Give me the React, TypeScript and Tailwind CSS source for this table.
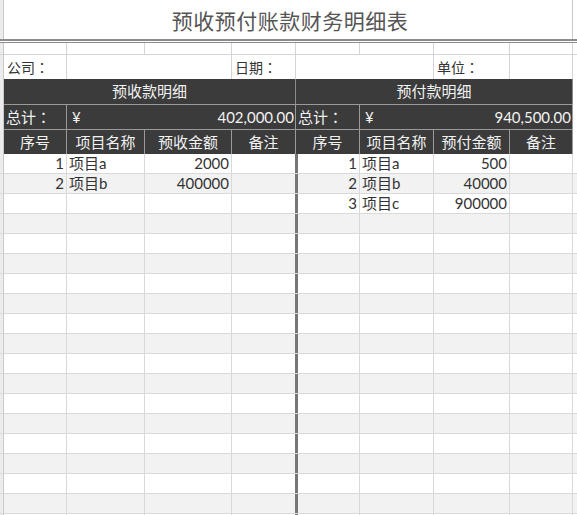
import React from "react";

const font = { fontFamily: '"Lato", "Noto Sans CJK SC", sans-serif' };

const W = [
  "w-[63px]",
  "w-[78px]",
  "w-[87px]",
  "w-[64px]",
  "w-[64px]",
  "w-[74px]",
  "w-[76px]",
  "w-[63px]",
];

function Strip({ cls = "" }: { cls?: string }) {
  return <div className={`w-[4px] shrink-0 bg-[#ececec] border-r border-[#c9c9c9] ${cls}`} />;
}

function Label({ t }: { t: string }) {
  return (
    <>
      {t}
      <span style={{ fontFamily: '"Noto Sans CJK TC", sans-serif' }}>：</span>
    </>
  );
}

const left = [
  { n: "1", name: "项目a", amt: "2000" },
  { n: "2", name: "项目b", amt: "400000" },
];
const right = [
  { n: "1", name: "项目a", amt: "500" },
  { n: "2", name: "项目b", amt: "40000" },
  { n: "3", name: "项目c", amt: "900000" },
];

export default function App() {
  const rows = Array.from({ length: 19 }, (_, i) => i);
  return (
    <div className="w-[577px] h-[515px] overflow-hidden bg-white text-[#333]" style={font}>
      {/* title */}
      <div className="flex h-[39px]">
        <Strip />
        <div className="w-[569px] border-r border-[#c9c9c9] flex items-center justify-center pt-[2px] pl-[4px] text-[21px] text-[#555] tracking-[0.5px]">
          预收预付账款财务明细表
        </div>
        <div className="flex-1" />
      </div>
      {/* double line */}
      <div className="h-[4px] border-t-2 border-b border-[#8c8c8c] bg-white" />
      {/* blank row */}
      <div className="flex h-[12px] border-b border-[#d4d4d4]">
        <Strip />
        {W.map((w, i) => (
          <div key={i} className={`${w} shrink-0 border-r border-[#d4d4d4]`} />
        ))}
      </div>
      {/* company row */}
      <div className="flex h-[24px] text-[14px] leading-[24px]">
        <Strip />
        <div className="w-[63px] shrink-0 border-r border-[#d4d4d4] pl-[3px]"><Label t="公司" /></div>
        <div className="w-[165px] shrink-0 border-r border-[#d4d4d4]" />
        <div className="w-[64px] shrink-0 border-r border-[#d4d4d4] pl-[3px]"><Label t="日期" /></div>
        <div className="w-[138px] shrink-0 border-r border-[#d4d4d4]" />
        <div className="w-[76px] shrink-0 border-r border-[#d4d4d4] pl-[3px]"><Label t="单位" /></div>
        <div className="w-[63px] shrink-0 border-r border-[#d4d4d4]" />
      </div>
      {/* section header */}
      <div className="flex h-[25px] text-[15px] leading-[25px] text-[#f2f2f2]">
        <Strip />
        <div className="w-[292px] shrink-0 bg-[#3b3b3b] border-r border-[#8a8a8a] text-center">预收款明细</div>
        <div className="w-[277px] shrink-0 bg-[#3b3b3b] border-r border-[#8a8a8a] text-center">预付款明细</div>
      </div>
      {/* total row */}
      <div className="flex h-[25px] text-[15px] leading-[24px] text-[#f2f2f2]">
        <Strip />
        <div className="w-[63px] shrink-0 bg-[#3b3b3b] border-r border-t border-[#9a9a9a] pl-[2px]"><Label t="总计" /></div>
        <div className="w-[229px] shrink-0 bg-[#3b3b3b] border-r border-t border-[#9a9a9a] flex justify-between pl-[5px] pr-[1px]">
          <span>¥</span>
          <span>402,000.00</span>
        </div>
        <div className="w-[64px] shrink-0 bg-[#3b3b3b] border-r border-t border-[#9a9a9a] pl-[2px]"><Label t="总计" /></div>
        <div className="w-[213px] shrink-0 bg-[#3b3b3b] border-r border-t border-[#9a9a9a] flex justify-between pl-[5px] pr-[1px]">
          <span>¥</span>
          <span>940,500.00</span>
        </div>
      </div>
      {/* column header */}
      <div className="flex h-[25px] text-[15px] leading-[24px] text-[#f2f2f2]">
        <Strip />
        {["序号", "项目名称", "预收金额", "备注", "序号", "项目名称", "预付金额", "备注"].map((t, i) => (
          <div key={i} className={`${W[i]} shrink-0 bg-[#3b3b3b] border-r border-t border-[#9a9a9a] text-center`}>
            {t}
          </div>
        ))}
      </div>
      {/* data rows */}
      {rows.map((r) => {
        const l = left[r];
        const rt = right[r];
        const bg = r % 2 === 1 ? "bg-[#f2f2f2]" : "bg-white";
        return (
          <div key={r} className={`flex h-[20px] text-[15px] leading-[19px] border-b border-[#d9d9d9] ${bg}`}>
            <Strip />
            <div className="w-[63px] shrink-0 border-r border-[#d9d9d9] text-right pr-[2px]">{l?.n}</div>
            <div className="w-[78px] shrink-0 border-r border-[#d9d9d9] pl-[2px]">{l?.name}</div>
            <div className="w-[87px] shrink-0 border-r border-[#d9d9d9] text-right pr-[2px]">{l?.amt}</div>
            <div className="w-[66px] shrink-0 border-r-[3px] border-[#767676]" />
            <div className="w-[62px] shrink-0 border-r border-[#d9d9d9] text-right pr-[2px]">{rt?.n}</div>
            <div className="w-[74px] shrink-0 border-r border-[#d9d9d9] pl-[2px]">{rt?.name}</div>
            <div className="w-[76px] shrink-0 border-r border-[#d9d9d9] text-right pr-[2px]">{rt?.amt}</div>
            <div className="w-[63px] shrink-0 border-r border-[#d9d9d9]" />
          </div>
        );
      })}
    </div>
  );
}
